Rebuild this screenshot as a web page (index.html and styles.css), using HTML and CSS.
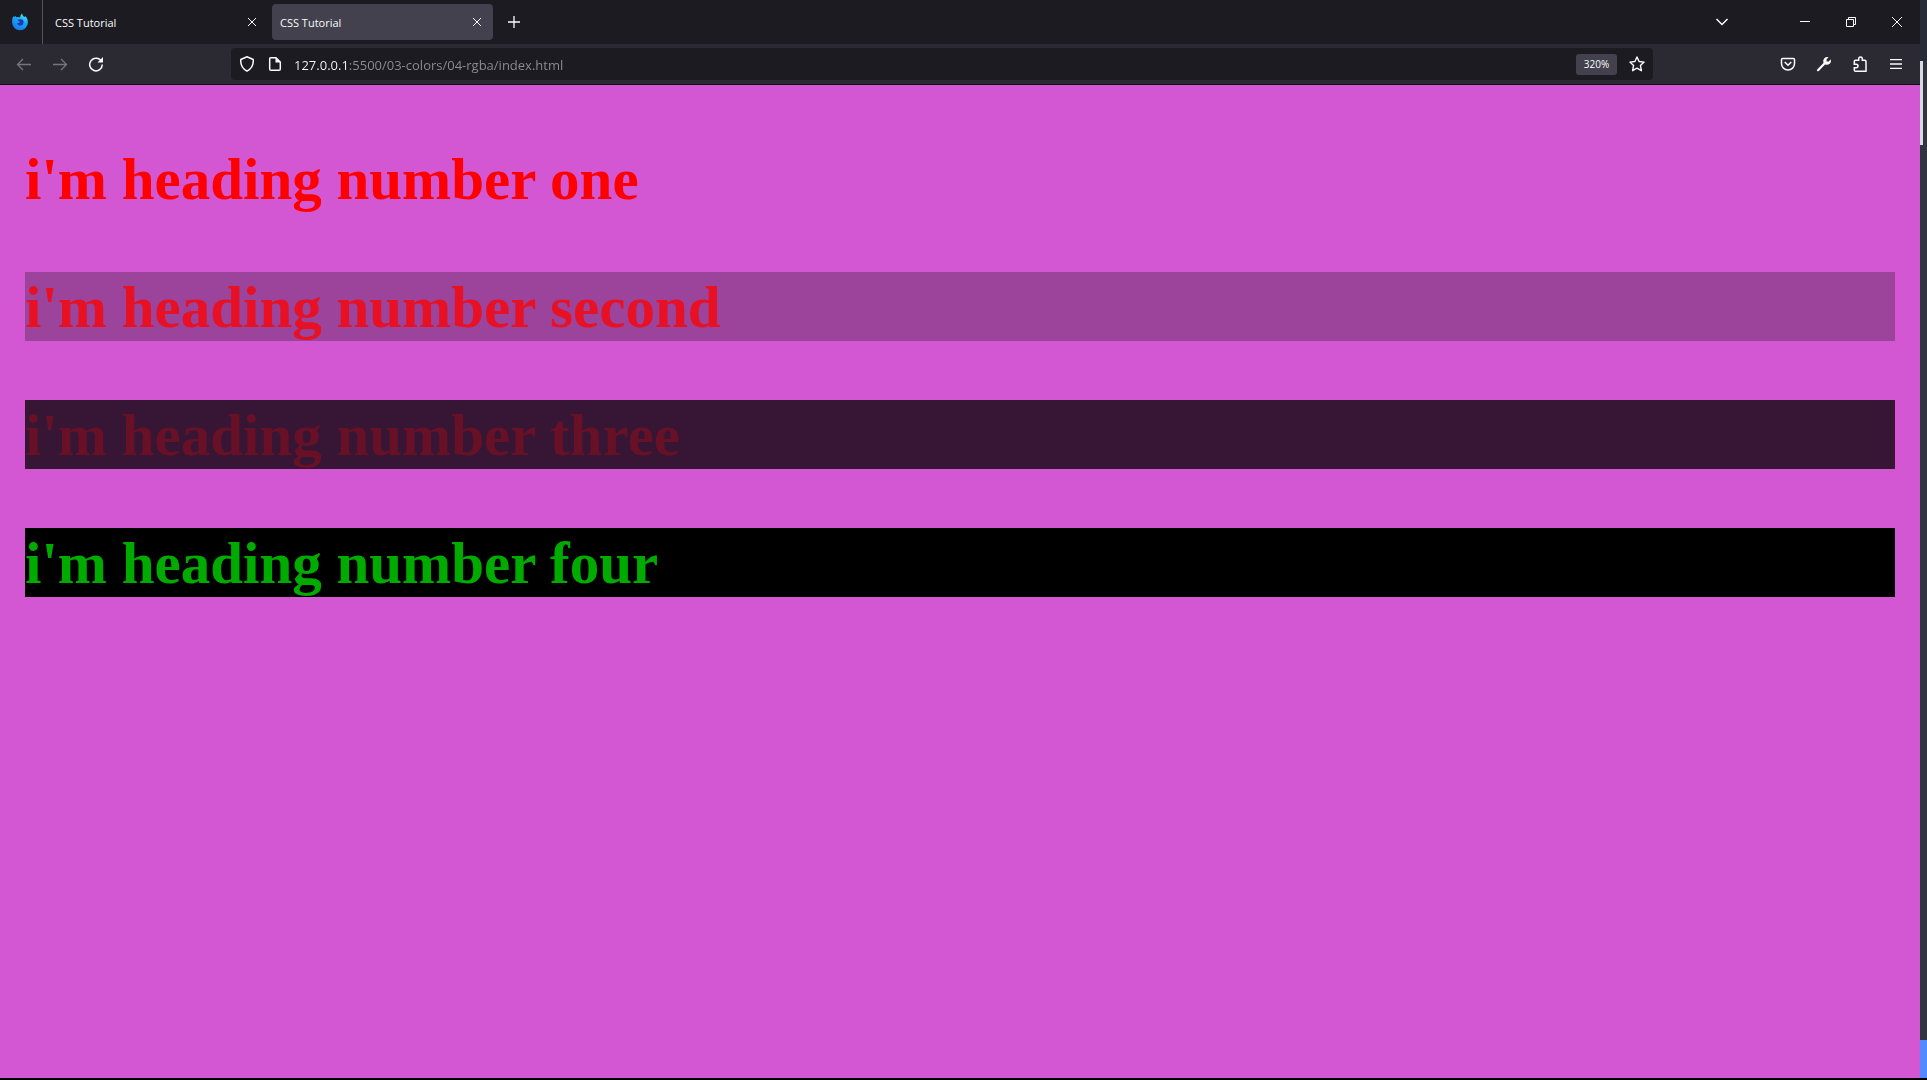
FILE: index.html
```html
<!DOCTYPE html>
<html lang="en">
<head>
<meta charset="utf-8">
<title>CSS Tutorial</title>
<link rel="stylesheet" href="styles.css">
</head>
<body>
<div class="desktop">
  <div class="browser">
    <header>
      <div class="tabstrip">
        <button class="firefox-view" aria-label="Firefox View">
          <svg width="18" height="18" viewBox="0 0 18 18">
            <defs>
              <linearGradient id="flame" x1="0.8" y1="0" x2="0.3" y2="1"><stop offset="0" stop-color="#4ff0fc"/><stop offset="0.45" stop-color="#16a8f6"/><stop offset="1" stop-color="#1677e8"/></linearGradient>
            </defs>
            <path d="M2.3 3.1 3 4.2 4.5 2.8 5.1 4.2Q7 3.6 9 4.4 9.300 1.700 11 .4 11.500 2.600 13.400 4L14.700 3.300Q17 6 16.900 9.300A7.900 7.900 0 0 1 1.100 9.300Q.9 5.700 2.300 3.100Z" fill="url(#flame)"/>
            <path d="M6.400 6.500Q8 6.800 9 6.200 12.800 6.100 12.600 9.400A3.400 3.400 0 0 1 6 10.200Q8.500 10.500 9.200 8.800 7.500 8.800 6.400 6.500Z" fill="#2634b0"/>
          </svg>
        </button>
        <div class="tab tab-first">
          <a href="#" class="tab-title">CSS Tutorial</a>
          <button class="tab-close" aria-label="Close tab"><svg width="10" height="10" viewBox="0 0 10 10"><path d="M1 1 9 9M9 1 1 9"/></svg></button>
        </div>
        <div class="tab tab-active">
          <a href="#" class="tab-title">CSS Tutorial</a>
          <button class="tab-close" aria-label="Close tab"><svg width="10" height="10" viewBox="0 0 10 10"><path d="M1 1 9 9M9 1 1 9"/></svg></button>
        </div>
        <button class="tool new-tab" aria-label="New tab"><svg width="12" height="12" viewBox="0 0 12 12"><path d="M6 0V12M0 6H12" stroke-width="1.300"/></svg></button>
        <button class="tool list-tabs" aria-label="List all tabs"><svg width="14" height="10" viewBox="0 0 14 10"><path d="M1.500 2 7 7.500 12.500 2" stroke-width="1.500"/></svg></button>
        <div class="window-controls">
          <button class="window-button" aria-label="Minimize"><svg width="10" height="10" viewBox="0 0 10 10"><path d="M0 4.500H10"/></svg></button>
          <button class="window-button" aria-label="Restore"><svg width="10" height="10" viewBox="0 0 10 10"><path d="M.5 2.500H7.500V9.500H.5ZM2.500 2.500V.5H9.500V7.500H7.500"/></svg></button>
          <button class="window-button" aria-label="Close"><svg width="10" height="10" viewBox="0 0 10 10"><path d="M0 0 10 10M10 0 0 10"/></svg></button>
        </div>
      </div>
      <div class="navbar">
        <div class="history">
          <button class="tool" disabled aria-label="Back"><svg width="16" height="16" viewBox="0 0 16 16"><path d="M15 8.500H1.500M7 3 1.500 8.500 7 14" stroke-width="1.300"/></svg></button>
          <button class="tool" disabled aria-label="Forward"><svg width="16" height="16" viewBox="0 0 16 16"><path d="M1 8.500H14.500M9 3 14.500 8.500 9 14" stroke-width="1.300"/></svg></button>
          <button class="tool" aria-label="Reload"><svg width="16" height="16" viewBox="0 0 16 16"><path d="M13.500 5.500A6.300 6.300 0 1 0 14.300 8.500" stroke-width="1.500"/><path d="M15 1V6.500H9.500Z" class="solid"/></svg></button>
        </div>
        <div class="urlbar">
          <button class="mini" aria-label="Tracking protection"><svg width="16" height="16" viewBox="0 0 16 16"><path d="M8 .8 14.200 3.500Q15 11.500 8 15.200 1 11.500 1.800 3.500Z" stroke-width="1.500" stroke-linejoin="round"/></svg></button>
          <button class="mini" aria-label="Site information"><svg width="16" height="16" viewBox="0 0 16 16"><path d="M3.500 1.700H9L13.300 6V13Q13.300 14.300 12 14.300H4Q2.700 14.300 2.700 13V2.700Q2.700 1.700 3.500 1.700Z" stroke-width="1.500"/><path d="M8.500 1.500V6.500H13.500Z" class="solid"/></svg></button>
          <input class="address" type="text" aria-label="Address" value="127.0.0.1:5500/03-colors/04-rgba/index.html">
          <button class="zoom">320%</button>
          <button class="mini" aria-label="Bookmark this page"><svg width="16" height="16" viewBox="0 0 16 16"><path d="M8 1 10.100 5.500 15.100 6.100 11.400 9.400 12.400 14.700 8 12.200 3.600 14.700 4.600 9.400.9 6.100 5.900 5.500Z" stroke-width="1.400" stroke-linejoin="round"/></svg></button>
        </div>
        <div class="extras">
          <button class="tool" aria-label="Save to Pocket"><svg width="16" height="16" viewBox="0 0 16 16"><path d="M2.500 2.500H13.500Q14.500 2.500 14.500 3.500V7.500A6.500 6.500 0 0 1 1.500 7.500V3.500Q1.500 2.500 2.500 2.500ZM4.700 6 8 9.200 11.300 6" stroke-width="1.500"/></svg></button>
          <button class="tool" aria-label="Developer tools"><svg width="16" height="16" viewBox="0 0 16 16"><path d="M2 14.200 9 7" stroke-width="2.200" stroke-linecap="round"/><path d="M12.600 1.200 10.600 3.300V5.400H12.700L14.800 3.300Q15.600 6 13.700 7.800 11.800 9.300 9.300 8.600L7.400 6.700Q6.700 4 8.300 2.300 10.200.5 12.600 1.200Z" class="solid"/></svg></button>
          <button class="tool" aria-label="Extensions"><svg width="16" height="16" viewBox="0 0 16 16"><path d="M6.700 4.300V2.700A1.800 1.800 0 0 1 10.300 2.700V4.300H12.700Q14 4.300 14 5.500V15.200H3.500Q2.300 15.200 2.300 13.900V11.800H4.200A1.800 1.800 0 0 0 4.200 8.200H2.300V5.500Q2.300 4.300 3.500 4.300Z" stroke-width="1.500"/></svg></button>
          <button class="tool" aria-label="Application menu"><svg width="12" height="12" viewBox="0 0 12 12"><path d="M0 1.600H12M0 6H12M0 10.400H12" stroke-width="1.400"/></svg></button>
        </div>
      </div>
    </header>
    <main class="page">
      <h1 class="heading one">i'm heading number one</h1>
      <h1 class="heading two">i'm heading number second</h1>
      <h1 class="heading three">i'm heading number three</h1>
      <h1 class="heading four">i'm heading number four</h1>
    </main>
  </div>
  <div class="backdrop">
    <div class="backdrop-top"></div>
    <div class="backdrop-thumb"></div>
    <div class="backdrop-fill"></div>
    <div class="backdrop-status"></div>
  </div>
</div>
</body>
</html>
```
FILE: styles.css
```css
* {
  box-sizing: border-box;
}

body {
  margin: 0;
  font-family: "Open Sans", "Noto Sans", sans-serif;
  font-size: 11px;
  color: #fbfbfe;
}

button {
  display: flex;
  align-items: center;
  justify-content: center;
  flex: none;
  padding: 0;
  border: 0;
  border-radius: 4px;
  background: none;
  color: inherit;
  font: inherit;
}

svg {
  display: block;
  fill: none;
  stroke: currentColor;
}

.solid {
  fill: currentColor;
  stroke: none;
}

.desktop {
  display: flex;
  min-height: 100vh;
  border-bottom: 2px solid #000;
}

.browser {
  display: flex;
  flex: 1;
  flex-direction: column;
  min-width: 0;
}

.tabstrip {
  display: flex;
  align-items: center;
  height: 44px;
  background: #1c1b22;
}

.firefox-view {
  width: 43px;
  height: 44px;
  padding-right: 3px;
  border-right: 1px solid #55545b;
  border-radius: 0;
}

.firefox-view svg {
  stroke: none;
}

.tab {
  display: flex;
  align-items: center;
  justify-content: space-between;
  width: 221px;
  height: 36px;
  padding: 0 4px 0 8px;
  border-radius: 4px;
}

.tab-first {
  margin: 0 4px;
}

.tab-active {
  background: #42414d;
}

.tab-title {
  color: inherit;
  text-decoration: none;
}

.tab-close {
  width: 24px;
  height: 24px;
}

.tool {
  width: 36px;
  height: 32px;
}

.new-tab {
  margin-left: 3px;
}

.list-tabs {
  margin-left: auto;
}

.window-controls {
  display: flex;
  margin-left: 42px;
}

.window-button {
  width: 46px;
  height: 44px;
}

.navbar {
  display: flex;
  align-items: center;
  justify-content: space-between;
  height: 41px;
  padding: 0 6px;
  border-bottom: 1px solid #0c0c0d;
  background: #2b2a33;
}

.history,
.extras {
  display: flex;
}

.history .tool:disabled {
  color: #76757c;
}

.urlbar {
  display: flex;
  align-items: center;
  flex: 1;
  height: 32px;
  margin: 0 117px;
  padding: 0 2px;
  border-radius: 4px;
  background: #1c1b22;
}

.mini {
  width: 28px;
  height: 28px;
}

.address {
  flex: 1;
  min-width: 0;
  margin-left: 5px;
  padding: 2px 0 0;
  border: 0;
  outline: 0;
  background: linear-gradient(90deg, #fbfbfe 55px, #8f8e94 55px);
  background-clip: text;
  color: transparent;
  font: 13px/20px "Open Sans", "Noto Sans", sans-serif;
}

.zoom {
  width: 41px;
  height: 21px;
  margin-right: 6px;
  border-radius: 3px;
  background: #42414d;
  font-size: 10px;
}

.page {
  display: flex;
  flex: 1;
  flex-direction: column;
  gap: 59px;
  padding: 59px 25px;
  background: #d357d3;
}

.heading {
  margin: 0;
  padding-top: 2px;
  font: bold 59px/67px "Liberation Serif", "Times New Roman", serif;
}

.one {
  color: #f00;
}

.two {
  background: #9c439c;
  color: #e81123;
}

.three {
  background: #361634;
  color: #681026;
}

.four {
  background: #000;
  color: #00ab00;
}

.backdrop {
  display: flex;
  flex-direction: column;
  width: 7px;
  background: #2f343e;
}

.backdrop-top {
  height: 61px;
  background: #282c37;
}

.backdrop-thumb {
  width: 3px;
  height: 84px;
  background: #d7dae0;
}

.backdrop-fill {
  flex: 1;
}

.backdrop-status {
  height: 38px;
  background: #528bff;
}
```
